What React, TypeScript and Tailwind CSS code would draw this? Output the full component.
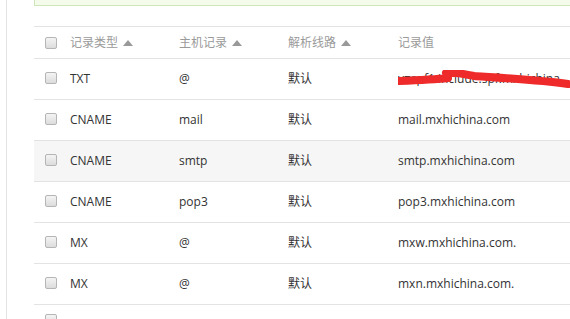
const rows = [
  { type: "TXT", host: "@", line: "默认", value: "v=spf1 include:spf.mxhichina.com -all", redacted: true },
  { type: "CNAME", host: "mail", line: "默认", value: "mail.mxhichina.com" },
  { type: "CNAME", host: "smtp", line: "默认", value: "smtp.mxhichina.com", hover: true },
  { type: "CNAME", host: "pop3", line: "默认", value: "pop3.mxhichina.com" },
  { type: "MX", host: "@", line: "默认", value: "mxw.mxhichina.com." },
  { type: "MX", host: "@", line: "默认", value: "mxn.mxhichina.com." },
];

const font = {
  fontFamily: '"Open Sans", "Noto Sans CJK SC", sans-serif',
};

const Checkbox = () => (
  <span className="block h-[12px] w-[12px] rounded-[2px] border border-[#b5b5b5] bg-gradient-to-b from-[#f4f4f4] to-[#dcdcdc]" />
);

const SortArrow = () => (
  <svg width="10" height="7" viewBox="0 0 10 7" className="ml-[5px] inline-block">
    <path d="M0 7 L5 1 L10 7 Z" fill="#999" />
  </svg>
);

const App = () => {
  return (
    <div
      className="h-[319px] w-[570px] overflow-hidden bg-white pl-[6px] text-[12px]"
      style={font}
    >
      <div className="h-full border-l border-[#e3e3e3] pl-[27px]">
        <div className="h-[6px] border-b border-l border-[#cfe6b8] bg-[#f4fbea]" />
        <div className="mt-[20px] w-[537px] border-t border-[#e3e3e3]">
          <div className="flex h-[32px] items-center border-b border-[#e3e3e3] text-[#9a9a9a]">
            <div className="w-[36px] shrink-0 pl-[11px]">
              <Checkbox />
            </div>
            <div className="flex w-[109px] shrink-0 items-center">
              记录类型
              <SortArrow />
            </div>
            <div className="flex w-[109px] shrink-0 items-center">
              主机记录
              <SortArrow />
            </div>
            <div className="flex w-[110px] shrink-0 items-center">
              解析线路
              <SortArrow />
            </div>
            <div className="min-w-0 flex-1">记录值</div>
          </div>
          {rows.map((r, idx) => (
            <div
              key={idx}
              className={`flex h-[41px] items-center border-b border-[#e3e3e3] text-[#333] ${
                r.hover ? "bg-[#f6f6f6]" : ""
              }`}
            >
              <div className="w-[36px] shrink-0 pb-[2px] pl-[11px]">
                <Checkbox />
              </div>
              <div className="w-[109px] shrink-0">{r.type}</div>
              <div className="w-[109px] shrink-0">{r.host}</div>
              <div className="w-[110px] shrink-0">{r.line}</div>
              <div className="relative min-w-0 flex-1 truncate">
                {r.value}
                {r.redacted && (
                  <svg
                    width="176"
                    height="26"
                    viewBox="0 0 176 26"
                    className="absolute left-[-4px] top-[-4px]"
                  >
                    <path
                      d="M5 15 C30 14 45 13 54 12 L52 7 C62 6 70 8 80 10 C110 12 145 14 174 18"
                      stroke="#ee2a2a"
                      strokeWidth="8"
                      strokeLinecap="round"
                      strokeLinejoin="round"
                      fill="none"
                    />
                  </svg>
                )}
              </div>
            </div>
          ))}
          <div className="flex h-[41px] items-start pt-[9px] text-[#333]">
            <div className="w-[36px] shrink-0 pl-[11px]">
              <Checkbox />
            </div>
            <div className="w-[109px] shrink-0" />
            <div className="w-[109px] shrink-0" />
            <div className="w-[110px] shrink-0" />
            <div className="min-w-0 flex-1 pl-[61px] pt-[5px]">
              <span className="block h-[10px] w-[25px] rounded-t-[6px] bg-[#e84343]" />
            </div>
          </div>
        </div>
      </div>
    </div>
  );
};

export default App;
